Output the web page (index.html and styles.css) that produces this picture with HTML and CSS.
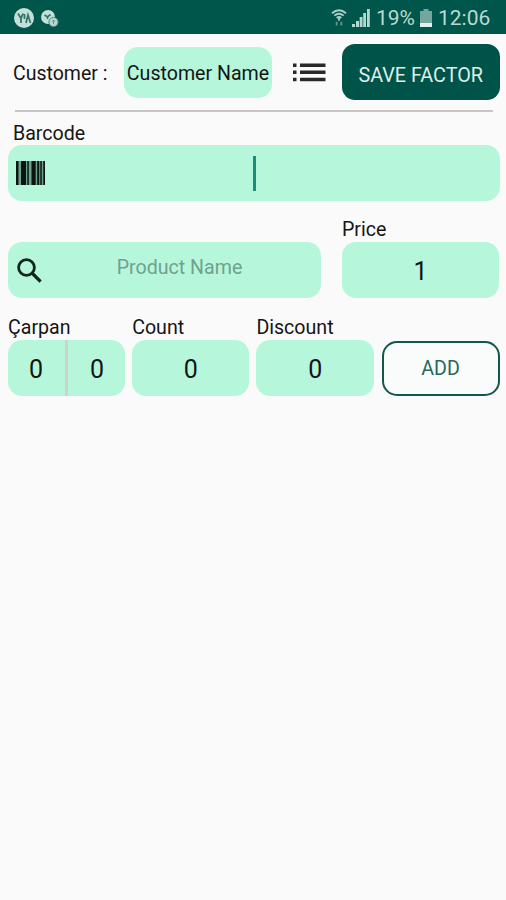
FILE: index.html
```html
<!DOCTYPE html>
<html lang="en">
<head>
<meta charset="utf-8">
<title>Factor</title>
<link rel="stylesheet" href="styles.css">
</head>
<body>
<header class="status">
  <svg class="status-notes" width="48" height="22" viewBox="0 0 48 22">
    <circle cx="11" cy="11" r="10" fill="#c4e0da"/>
    <path d="M5 6.500l3 5 2-5M8 11v5M13 16l2-8 2.500 8M11.500 7v5" fill="none" stroke="#35766a" stroke-width="1.800"/>
    <circle cx="35" cy="10" r="7" fill="#c4e0da"/>
    <path d="M31.500 8l3 2 3-2.500M34.500 10v2" fill="none" stroke="#35766a" stroke-width="1.700"/>
    <circle cx="40.500" cy="15" r="4.600" fill="#b5d8d0" stroke="#4c897e" stroke-width="1"/>
    <path d="M39 14h3M40.500 13v4" stroke="#5c9a8e" stroke-width="1"/>
  </svg>
  <div class="status-right">
    <svg class="wifi" width="16" height="19" viewBox="0 0 17 19" fill="none" stroke="#a9cec7" stroke-width="1.900">
      <path d="M1 5Q8.500-1.500 16 5M3.500 7.500Q8.500 3.500 13.500 7.500M6 10Q8.500 8 11 10"/>
      <path d="M8.500 9v4"/><path d="M6 14v4M11 14v4" stroke="#5c9a8e"/>
    </svg>
    <svg class="signal" width="18" height="18" viewBox="0 0 18 18" fill="#b6d6d0">
      <path d="M0 15h3v3H0zM4 12h3v6H4zM7.700 8h2.800v10H7.700zM11.200 4H14v14h-2.800zM15 0h2.800v18H15z"/>
    </svg>
    <span class="percent">19%</span>
    <svg class="battery" width="12" height="18" viewBox="0 0 12 18">
      <path d="M3.500 0h5v2H12v12H0V2h3.500z" fill="#74a69d"/><path d="M0 14h12v4H0z" fill="#e0f0ed"/>
    </svg>
    <span class="clock">12:06</span>
  </div>
</header>
<main>
  <section class="customer">
    <span class="customer-label">Customer :</span>
    <div class="chip">Customer Name</div>
    <svg class="list" width="33" height="19" viewBox="0 0 33 19" fill="#292929">
      <path d="M0 .5h3.500V4H0zM7 .5h25.500V4H7zM0 7.500h3.500V11H0zM7 7.500h25.500V11H7zM0 14.700h3.500v3.500H0zM7 14.700h25.500v3.500H7z"/>
    </svg>
    <button class="save">SAVE FACTOR</button>
  </section>
  <hr>
  <section class="barcode">
    <label class="inset">Barcode</label>
    <div class="field">
      <svg class="bars" width="29" height="24" viewBox="0 0 29 24">
        <path d="M0 0h29v24H0z" fill="#6ba58f"/>
        <path d="M0 0h2.500v24H0zM5 0h5v24H5zM11.300 0h1.500v24h-1.500zM15.500 0h4.200v24h-4.200zM21.200 0h2v24h-2zM24.300 0h1.500v24h-1.500zM27.300 0H29v24h-1.700z" fill="#0b1511"/>
      </svg>
      <span class="caret"></span>
    </div>
  </section>
  <section class="product">
    <div class="field">
      <svg class="search" width="25" height="25" viewBox="0 0 25 25" fill="none" stroke="#10271e" stroke-width="2.800">
        <circle cx="9.500" cy="9.500" r="7.900"/><path d="M15.500 15.500L23.600 23.600" stroke-width="3.300"/>
      </svg>
      <span class="hint">Product Name</span>
    </div>
    <div class="price"><label>Price</label><div class="field number">1</div></div>
  </section>
  <section class="amounts">
    <div><label>Çarpan</label><div class="field split"><span>0</span><span>0</span></div></div>
    <div><label>Count</label><div class="field number">0</div></div>
    <div><label>Discount</label><div class="field number">0</div></div>
    <button class="add">ADD</button>
  </section>
</main>
</body>
</html>
```
FILE: styles.css
```css
* { box-sizing: border-box; }
body {
  margin: 0;
  min-height: 900px;
  background: #fafafa;
  color: #151515;
  font: 19.600px/24px Roboto, sans-serif;
}
svg { display: block; flex: none; }
button { font: inherit; padding: 0; }
.status {
  height: 34px;
  padding: 1px 15px 0 13px;
  display: flex;
  align-items: center;
  justify-content: space-between;
  background: #00564a;
  color: #b9d9d3;
}
.status-right { display: flex; align-items: center; }
.signal { margin: 0 6px 0 5px; }
.percent { width: 39px; margin-right: 5px; padding-top: 1px; font-size: 21px; white-space: nowrap; }
.clock { margin-left: 6px; width: 53px; padding-top: 1px; font-size: 21px; white-space: nowrap; }
main { padding: 10px 6.500px 0 8px; }
.customer { display: flex; align-items: center; height: 56px; }
.customer-label { width: 116px; padding: 4px 0 0 5px; font-size: 19.500px; }
.chip {
  width: 148px;
  height: 51px;
  border-radius: 14px;
  background: #b6f7dc;
  line-height: 53px;
  text-align: center;
  white-space: nowrap;
}
.list { margin: 0 16px 0 21px; }
.save {
  flex: 1;
  height: 56px;
  padding-top: 8px;
  border: 0;
  border-radius: 13px;
  background: #005348;
  color: #dcefea;
  font-size: 19.800px;
  white-space: nowrap;
}
hr { height: 2px; margin: 10px 7px 9px 7px; border: 0; background: #c6c6c6; }
label { display: block; height: 24px; white-space: nowrap; }
.inset { padding-left: 5px; line-height: 26px; }
.field {
  position: relative;
  display: flex;
  align-items: center;
  height: 56px;
  border-radius: 14px;
  background: #b6f7dc;
}
.bars { margin-left: 8px; }
.caret { width: 3px; height: 35px; margin-left: 208px; background: #168f7a; }
.product { display: grid; grid-template-columns: 313px 157px; column-gap: 21px; align-items: end; margin-top: 17px; }
.search { margin-left: 9px; }
.hint { flex: 1; padding: 0 44px 4px 40px; text-align: center; color: #6fa28e; white-space: nowrap; }
.number { justify-content: center; font-size: 25px; padding-top: 4px; }
.amounts { display: grid; grid-template-columns: 117px 117px 118px 118px; column-gap: 7.200px; align-items: end; margin-top: 17.500px; }
.split { font-size: 25px; padding-top: 4px; }
.split span { flex: 1; text-align: center; }
.split span:first-child { padding-right: 5px; }
.split::before { content: ""; position: absolute; left: 57px; top: 0; width: 2.500px; height: 56px; background: #cfd2ce; }
.add {
  height: 55px;
  padding-top: 2px;
  border: 2px solid #12574b;
  border-radius: 15px;
  background: #fafcfb;
  color: #28675b;
}
```
